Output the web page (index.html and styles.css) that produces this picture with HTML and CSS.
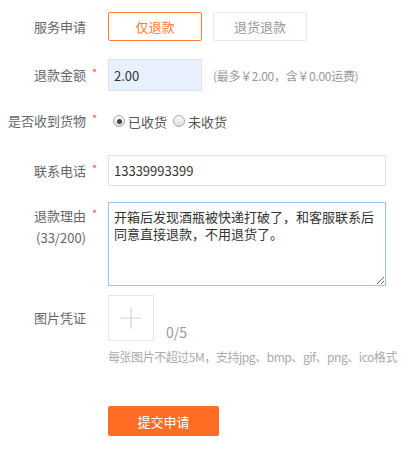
FILE: index.html
```html
<!DOCTYPE html>
<html lang="zh-CN">
<head>
<meta charset="utf-8">
<link rel="stylesheet" href="styles.css">
</head>
<body>
<form class="form">
  <div class="row row-service">
    <div class="lab"><span class="t">服务申请</span><span class="s"></span></div>
    <div class="ctrl">
      <button type="button" class="opt active">仅退款</button>
      <button type="button" class="opt">退货退款</button>
    </div>
  </div>

  <div class="row row-amount">
    <div class="lab"><span class="t">退款金额</span><span class="s">*</span></div>
    <div class="ctrl">
      <input class="inp inp-amount" type="text" value="2.00">
      <span class="note">(最多￥2.00，含￥0.00运费)</span>
    </div>
  </div>

  <div class="row row-recv">
    <div class="lab"><span class="t">是否收到货物</span><span class="s">*</span></div>
    <div class="ctrl">
      <label class="radio"><span class="dot checked"></span>已收货</label>
      <label class="radio"><span class="dot"></span>未收货</label>
    </div>
  </div>

  <div class="row row-phone">
    <div class="lab"><span class="t">联系电话</span><span class="s">*</span></div>
    <div class="ctrl">
      <input class="inp inp-phone" type="text" value="13339993399">
    </div>
  </div>

  <div class="row row-reason">
    <div class="lab lab-top"><span class="t">退款理由<br>(33/200)</span><span class="s">*</span></div>
    <div class="ctrl">
      <textarea class="area">开箱后发现酒瓶被快递打破了，和客服联系后同意直接退款，不用退货了。</textarea>
    </div>
  </div>

  <div class="row row-pic">
    <div class="lab"><span class="t">图片凭证</span><span class="s"></span></div>
    <div class="ctrl ctrl-pic">
      <div class="uprow">
        <div class="upload">
          <svg width="22" height="22" viewBox="0 0 22 22"><path d="M11 0.5V21.5M0.5 11H21.5" stroke="#d4d4d4" stroke-width="1.2" fill="none"/></svg>
        </div>
        <span class="count">0/5</span>
      </div>
      <div class="tip">每张图片不超过5M，支持jpg、bmp、gif、png、ico格式</div>
    </div>
  </div>

  <div class="row row-submit">
    <div class="lab"></div>
    <div class="ctrl">
      <button type="button" class="submit">提交申请</button>
    </div>
  </div>
</form>
</body>
</html>
```

FILE: styles.css
```css
* { box-sizing: border-box; }
html, body { margin: 0; padding: 0; background: #fff; }
body {
  font-family: "Noto Sans CJK SC", "Noto Sans", sans-serif;
  font-size: 13px;
  color: #666;
  width: 403px;
  height: 450px;
  overflow: hidden;
}
.form { padding-top: 12px; }
.row { display: flex; align-items: center; }
.lab { width: 108px; flex-shrink: 0; display: flex; align-items: center; }
.lab .t { width: 86px; text-align: right; line-height: 18px; color: #666; white-space: nowrap; }
.lab .s { width: 22px; padding-left: 6px; color: #ff4d4d; font-size: 11px; line-height: 10px; align-self: flex-start; padding-top: 1px; }
.ctrl { display: flex; align-items: center; }

.opt {
  width: 94px; height: 29px; margin: 0 11px 0 0; padding: 0;
  border: 1.5px solid #e6e6e6; border-radius: 2px; background: #fff;
  font-family: inherit; font-size: 13px; color: #999;
}
.opt.active { border-color: #ff7b3a; color: #ff7b3a; }

.row-amount { margin-top: 18px; }
.inp {
  height: 32px; border: 1px solid #ddd; border-radius: 0;
  padding: 0 5px; font-family: inherit; font-size: 13px; color: #333; outline: none;
}
.inp-amount { width: 94px; background: #e8f0fe; border-color: #dde3ec; }
.note { margin-left: 11px; font-size: 12px; color: #999; letter-spacing: -0.3px; white-space: nowrap; }

.row-recv { margin-top: 20px; height: 20px; }
.radio { display: flex; align-items: center; color: #555; margin-right: 6px; }
.dot {
  width: 12px; height: 12px; border-radius: 50%; margin: 0 3px 0 5px;
  border: 1px solid #aaa; background: linear-gradient(#fdfdfd, #dcdcdc);
  display: flex; align-items: center; justify-content: center;
}
.radio:last-child .dot { margin-left: 0; }
.dot.checked::after { content: ""; width: 5px; height: 5px; border-radius: 50%; background: #444; }

.row-phone { margin-top: 24px; }
.inp-phone { width: 278px; height: 31px; background: #fff; border-color: #e3e3e3; }

.row-reason { margin-top: 16px; align-items: flex-start; }
.lab-top { align-items: flex-start; padding-top: 3px; }
.lab-top .t { line-height: 22px; }
.lab-top .s { padding-top: 3px; }
.area {
  width: 278px; height: 84px; margin: 0; display: block;
  border: 1px solid #9fc0f3; border-radius: 0;
  padding: 5px 5px; font-family: inherit; font-size: 13px; line-height: 17px;
  color: #333; resize: both; outline: none;
}

.row-pic { margin-top: 9px; align-items: flex-start; }
.row-pic .lab { height: 46px; }
.ctrl-pic { flex-direction: column; align-items: flex-start; }
.uprow { display: flex; align-items: flex-end; }
.upload {
  width: 46px; height: 46px; border: 1px solid #e6e6e6;
  display: flex; align-items: center; justify-content: center;
}
.count { margin-left: 12px; font-size: 14px; color: #999; line-height: 16px; margin-bottom: 1px; }
.tip { margin-top: 8px; font-size: 12px; color: #aaa; line-height: 16px; white-space: nowrap; letter-spacing: -0.45px; }

.row-submit { margin-top: 41px; }
.submit {
  width: 111px; height: 30px; margin: 0; padding: 0;
  border: none; border-radius: 2px; background: #ff6d24;
  color: #fff; font-family: inherit; font-size: 13px;
}
```
